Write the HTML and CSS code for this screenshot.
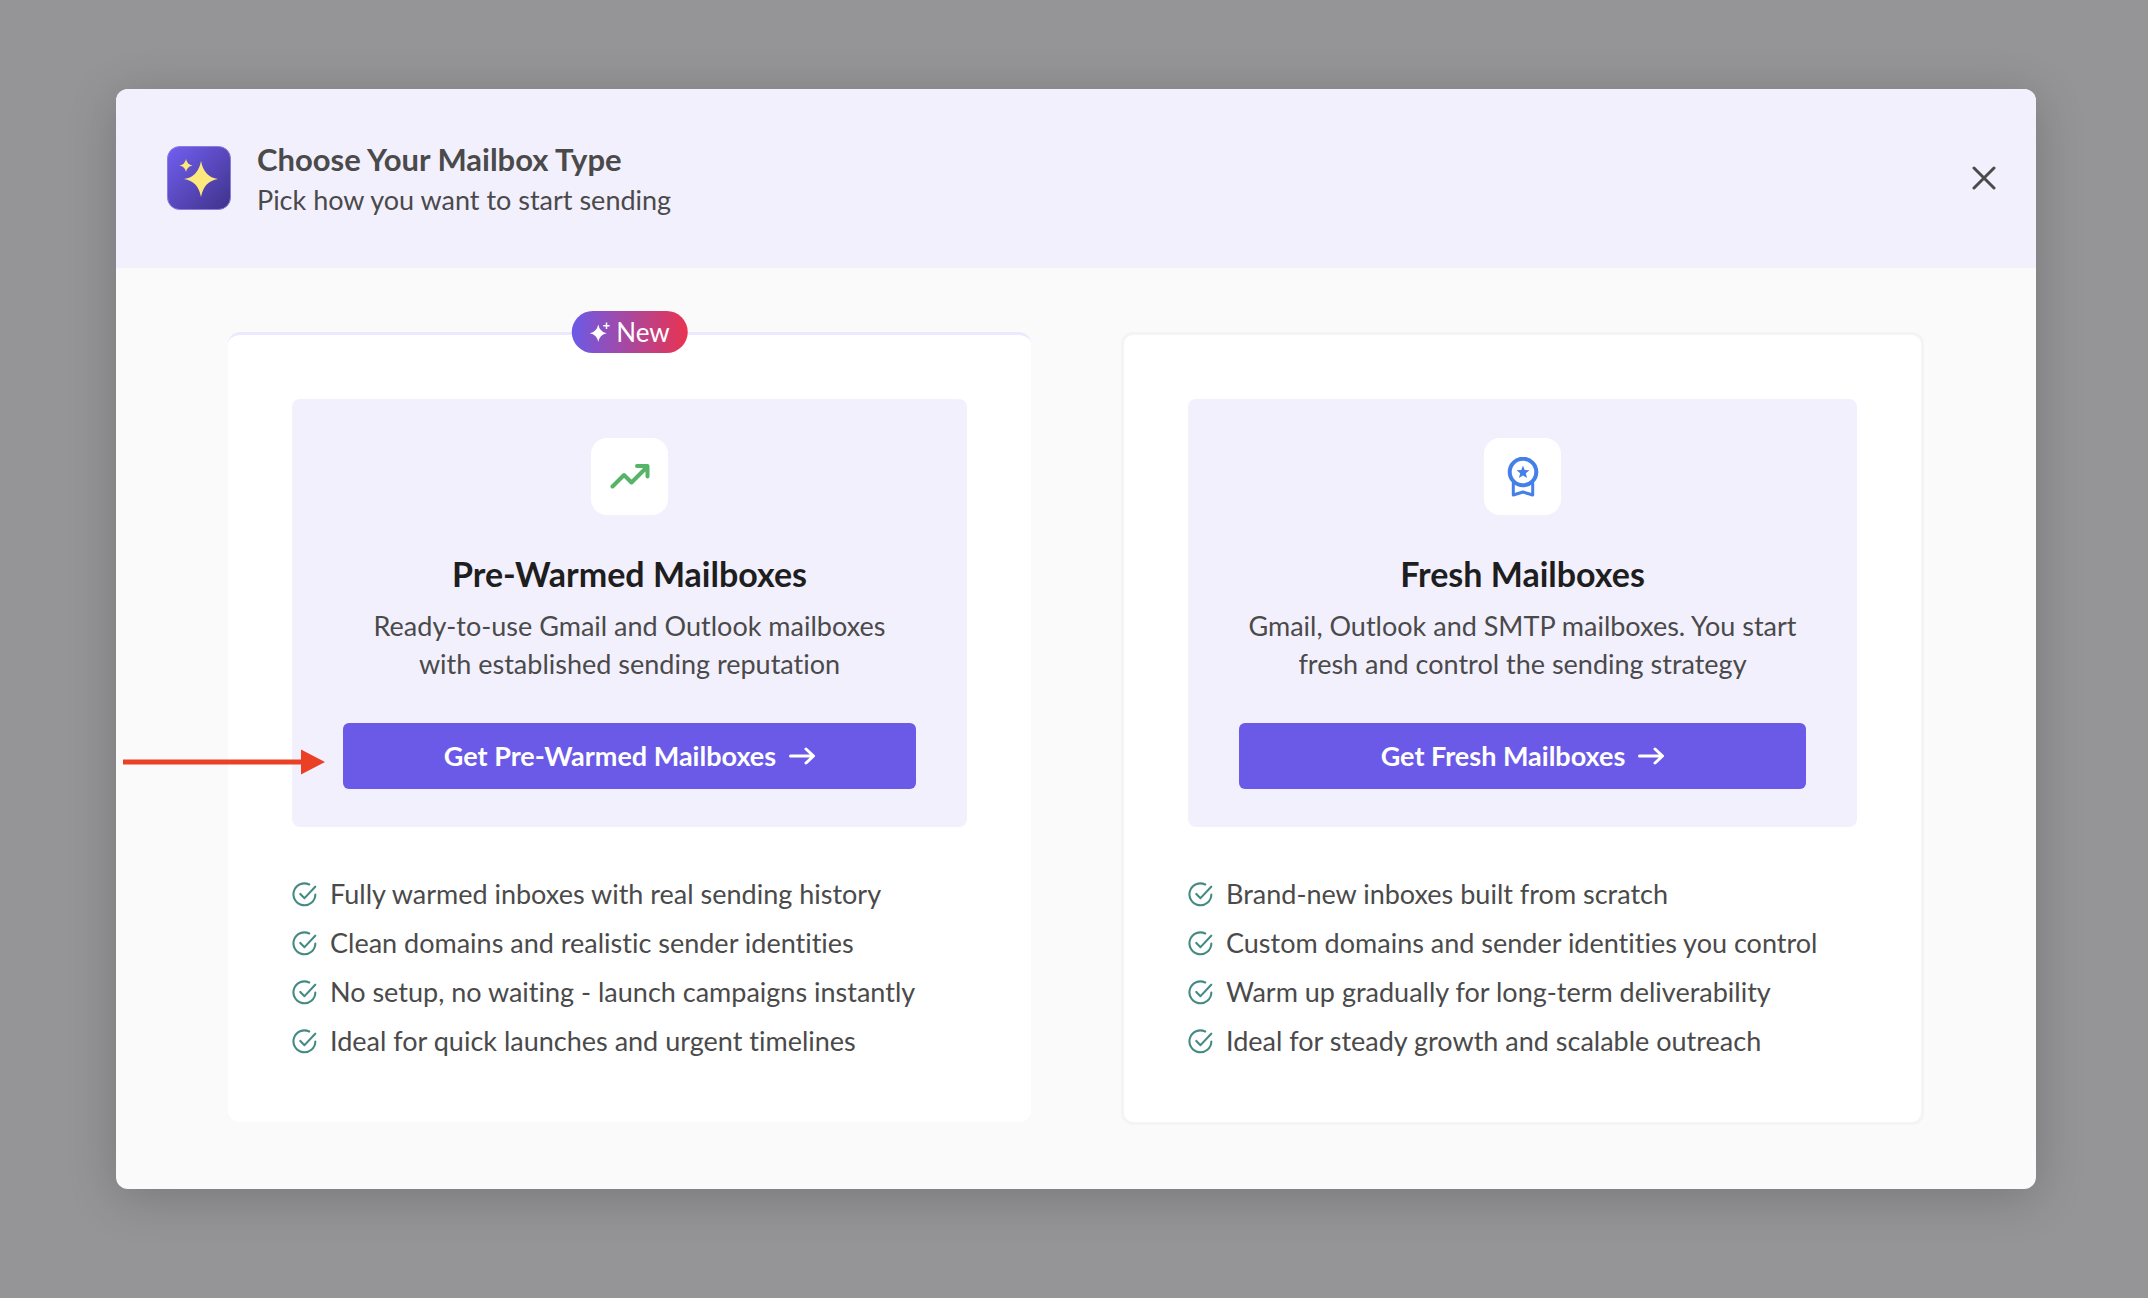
FILE: index.html
```html
<!DOCTYPE html>
<html lang="en">
<head>
    <meta charset="utf-8">
    <meta name="viewport" content="width=device-width,initial-scale=1.0">
    <title>Choose Your Mailbox Type</title>
    <link rel="stylesheet" href="styles.css">
</head>
<body>
    <div class="modal" role="dialog" aria-labelledby="modal-title">
        <header class="modal-header">
            <svg class="logo" viewBox="0 0 64 64">
                <defs>
                    <linearGradient id="logo-bg" x1="0" y1="0" x2="1" y2="1">
                        <stop offset="0" stop-color="#725ff2"/>
                        <stop offset="1" stop-color="#3f3289"/>
                    </linearGradient>
                </defs>
                <rect x="0.5" y="0.5" width="63" height="63" rx="12" fill="url(#logo-bg)" stroke="#8a7ddb"/>
                <path fill="#fde87c" d="M34 15Q37 31 51 33Q37 35 34 51Q31 35 17 33Q31 31 34 15z"/>
                <path fill="#fde87c" d="M19 13Q20 18.500 25.500 19.500Q20 20.500 19 26Q18 20.500 12.500 19.500Q18 18.500 19 13z"/>
            </svg>
            <div class="heading">
                <h1 id="modal-title">Choose Your Mailbox Type</h1>
                <p>Pick how you want to start sending</p>
            </div>
            <button class="close" type="button" aria-label="Close">
                <svg viewBox="0 0 24 24"><path d="M2 2L22 22M22 2L2 22"/></svg>
            </button>
        </header>

        <main class="cards">
            <section class="card card-new">
                <span class="badge">
                    <svg viewBox="0 0 20 20">
                        <path d="M8.500 2.500Q10 10 17 11.200Q10 12.400 8.500 20Q7 12.400 0 11.200Q7 10 8.500 2.500z"/>
                        <path d="M16 0.500H17.500V3H20V4.500H17.500V7H16V4.500H13.500V3H16z"/>
                    </svg>
                    New
                </span>
                <div class="panel">
                    <div class="tile">
                        <svg class="trend" viewBox="0 0 40 40"><path d="M2.500 29.500L14 18L21.500 25.500L37 10M27 9H37.500V19.500"/></svg>
                    </div>
                    <h2>Pre-Warmed Mailboxes</h2>
                    <p>Ready-to-use Gmail and Outlook mailboxes<br>with established sending reputation</p>
                    <div class="action">
                        <svg class="pointer" viewBox="0 0 202 26"><path d="M0 10.500H178V0.500L202 13L178 25.500V15.500H0z"/></svg>
                        <button class="btn" type="button">
                            Get Pre-Warmed Mailboxes
                            <svg viewBox="0 0 26 18"><path d="M1.500 9H24M17 2L24.500 9L17 16"/></svg>
                        </button>
                    </div>
                </div>
                <ul class="features">
                    <li><svg><use href="#check"/></svg>Fully warmed inboxes with real sending history</li>
                    <li><svg><use href="#check"/></svg>Clean domains and realistic sender identities</li>
                    <li><svg><use href="#check"/></svg>No setup, no waiting - launch campaigns instantly</li>
                    <li><svg><use href="#check"/></svg>Ideal for quick launches and urgent timelines</li>
                </ul>
            </section>

            <section class="card card-fresh">
                <div class="panel">
                    <div class="tile">
                        <svg class="award" viewBox="0 0 32 40">
                            <circle cx="16" cy="15" r="13.300"/>
                            <path class="ribbon" d="M6.300 26V38L16 35L25.700 38V26"/>
                            <path class="star" d="M16 8.500L17.700 13.100L22.500 13.300L18.800 16.300L20.100 21.100L16 18.400L11.900 21.100L13.200 16.300L9.500 13.300L14.300 13.100z"/>
                        </svg>
                    </div>
                    <h2>Fresh Mailboxes</h2>
                    <p>Gmail, Outlook and SMTP mailboxes. You start<br>fresh and control the sending strategy</p>
                    <div class="action">
                        <button class="btn" type="button">
                            Get Fresh Mailboxes
                            <svg viewBox="0 0 26 18"><path d="M1.500 9H24M17 2L24.500 9L17 16"/></svg>
                        </button>
                    </div>
                </div>
                <ul class="features">
                    <li><svg><use href="#check"/></svg>Brand-new inboxes built from scratch</li>
                    <li><svg><use href="#check"/></svg>Custom domains and sender identities you control</li>
                    <li><svg><use href="#check"/></svg>Warm up gradually for long-term deliverability</li>
                    <li><svg><use href="#check"/></svg>Ideal for steady growth and scalable outreach</li>
                </ul>
            </section>
        </main>
    </div>

    <svg class="sprite">
        <symbol id="check" viewBox="0 0 24 24">
            <path d="M16.500 2.400A10.500 10.500 0 1 0 22.400 12M8 11.500L12 15.500L22.300 4.500"/>
        </symbol>
    </svg>
</body>
</html>
```

FILE: styles.css
```css
* { box-sizing: border-box; }
body { margin: 0; min-height: 100vh; padding: 89px 112px 109px 116px; background: #959597; color: #4a4a4a; font: 27px/38px Lato, "Open Sans", sans-serif; font-variant-ligatures: none; }
h1, h2, p, ul { margin: 0; padding: 0; }
button { font: inherit; border: none; cursor: pointer; }
svg { display: block; flex: none; fill: none; stroke-linecap: round; stroke-linejoin: round; }

.modal { border-radius: 12px; overflow: hidden; background: #fafafa; box-shadow: 0 8px 50px rgba(0,0,0,.2); }
.modal-header { display: flex; align-items: center; gap: 26px; padding: 48px 40px 49px 51px; background: #f3f0fe; }
.logo { width: 64px; height: 64px; }
.heading { flex: 1; }
.heading h1 { font-size: 31px; line-height: 44px; font-weight: 700; }
.close { padding: 0; background: none; }
.close svg { width: 24px; height: 24px; stroke: #4a4a4a; stroke-width: 3; }

.cards { display: grid; grid-template-columns: 1fr 1fr; align-items: start; gap: 90px; padding: 64px 112px; }
.card { position: relative; padding: 64px 64px 62px; border-top: 3px solid #ece8fd; border-radius: 12px; background: #fff; }
.card-fresh { border: 3px solid #f4f4f4; }
.badge { position: absolute; top: -24px; left: 50%; transform: translateX(-50%); display: flex; align-items: center; gap: 7px; height: 42px; padding: 0 18px; border-radius: 21px; background: linear-gradient(90deg, #6b5ae8, #ea3350); color: #fff; font-size: 26px; }
.badge svg { width: 20px; height: 20px; fill: #fff; }

.panel { padding: 39px 51px 38px; border-radius: 8px; background: #f3f0fe; text-align: center; }
.tile { display: flex; align-items: center; justify-content: center; width: 77px; height: 77px; margin: 0 auto 38px; border-radius: 16px; background: #fff; }
.trend { width: 40px; height: 40px; stroke: #55b467; stroke-width: 4; }
.award { width: 32px; height: 40px; stroke: #4480e8; stroke-width: 4; }
.award .ribbon { stroke-width: 3; }
.award .star { fill: #4480e8; stroke: none; }
.panel h2 { margin-bottom: 12px; color: #1e1e1e; font-size: 34px; line-height: 42px; font-weight: 700; }
.action { position: relative; margin-top: 40px; }
.btn { display: flex; align-items: center; justify-content: center; gap: 13px; width: 100%; height: 66px; border-radius: 6px; background: #6b5ae8; color: #fff; font-weight: 700; }
.btn svg { width: 26px; height: 18px; stroke: #fff; stroke-width: 3; }
.pointer { position: absolute; top: 26px; right: 100%; width: 202px; height: 26px; margin-right: 18px; fill: #ea4025; }

.features { display: grid; gap: 11px; margin-top: 48px; list-style: none; }
.features li { display: flex; align-items: center; gap: 13px; }
.features svg { width: 25px; height: 25px; stroke: #438a83; stroke-width: 2; }
.sprite { display: none; }
```
